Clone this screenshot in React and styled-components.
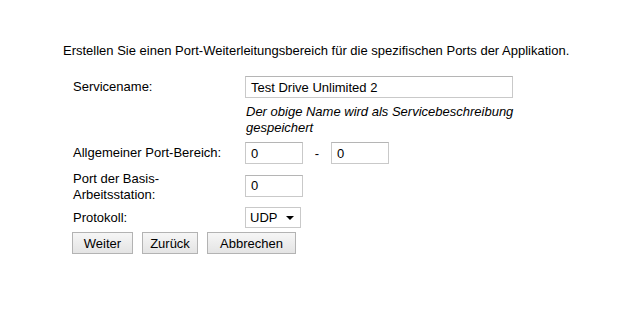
import styled, { createGlobalStyle } from "styled-components"

const Global = createGlobalStyle`
  body {
    margin: 0;
    background: #fff;
    font-family: "Liberation Sans", Arial, sans-serif;
    font-size: 13px;
    color: #000;
  }
`

const Page = styled.div`
  padding: 43px 0 0 63px;
`

const Intro = styled.p`
  margin: 0 0 17px;
  line-height: 16px;
`

const Form = styled.div`
  display: grid;
  grid-template-columns: 172px 280px;
  margin-left: 10px;
`

const Label = styled.div`
  display: flex;
  align-items: center;
  line-height: 16px;
  padding: ${p => p.$pad || "0"};
`

const Cell = styled.div`
  display: flex;
  align-items: center;
  padding: ${p => p.$pad || "0"};
`

const Input = styled.div`
  box-sizing: border-box;
  width: ${p => p.$w}px;
  height: 22px;
  border: 1px solid #c9c9c9;
  border-top-color: #b5b5b5;
  padding: 0 5px 0 5px;
  display: flex;
  align-items: center;
  background: #fff;
`

const Dash = styled.span`
  width: 28px;
  text-align: center;
`

const Hint = styled.div`
  font-style: italic;
  line-height: 16px;
  width: 275px;
  padding: 6px 0 6px 1px;
`

const Select = styled.div`
  box-sizing: border-box;
  width: 56px;
  height: 21px;
  border: 1px solid #c9c9c9;
  display: flex;
  align-items: center;
  justify-content: space-between;
  padding: 0 6px 0 4px;
  background: #fff;
`

const Caret = styled.span`
  width: 0;
  height: 0;
  border-left: 4px solid transparent;
  border-right: 4px solid transparent;
  border-top: 4px solid #000;
  margin-top: 1px;
`

const Buttons = styled.div`
  display: flex;
  gap: 9px;
  margin: 4px 0 0 9px;
`

const Button = styled.button`
  box-sizing: border-box;
  height: 22px;
  width: ${p => p.$w}px;
  font-family: "Liberation Sans", Arial, sans-serif;
  font-size: 13px;
  color: #000;
  border: 1px solid #b3b3b3;
  border-radius: 0;
  background: linear-gradient(#f6f6f6, #e4e4e4);
  padding: 0;
`

export default function App() {
  return (
    <>
      <Global />
      <Page>
        <Intro>Erstellen Sie einen Port-Weiterleitungsbereich für die spezifischen Ports der Applikation.</Intro>
        <Form>
          <Label>Servicename:</Label>
          <Cell>
            <Input $w={268}>Test Drive Unlimited 2</Input>
          </Cell>

          <div />
          <Hint>Der obige Name wird als Servicebeschreibung gespeichert</Hint>

          <Label>Allgemeiner Port-Bereich:</Label>
          <Cell>
            <Input $w={58}>0</Input>
            <Dash>-</Dash>
            <Input $w={58}>0</Input>
          </Cell>

          <Label $pad="7px 0 4px">Port der Basis-<br />Arbeitsstation:</Label>
          <Cell $pad="4px 0 4px">
            <Input $w={58}>0</Input>
          </Cell>

          <Label>Protokoll:</Label>
          <Cell>
            <Select>UDP<Caret /></Select>
          </Cell>
        </Form>
        <Buttons>
          <Button $w={61}>Weiter</Button>
          <Button $w={56}>Zurück</Button>
          <Button $w={89}>Abbrechen</Button>
        </Buttons>
      </Page>
    </>
  )
}
